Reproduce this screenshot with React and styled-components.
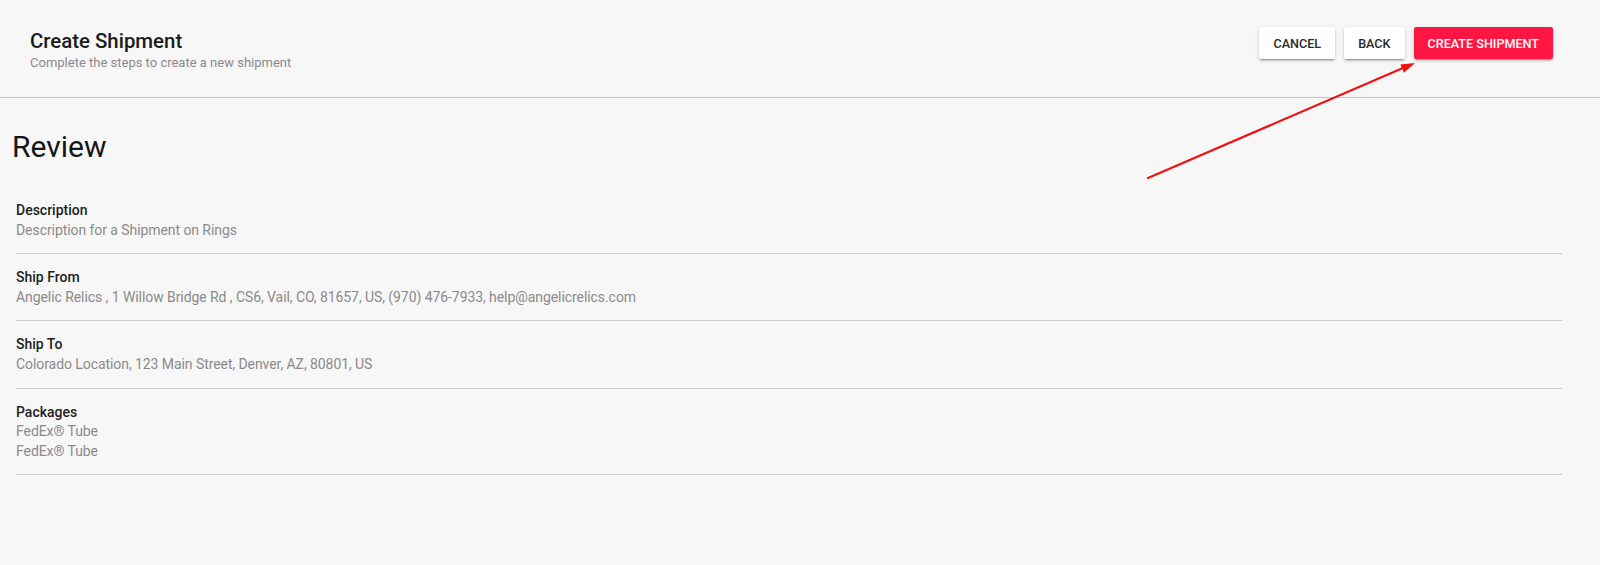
import React from "react";
import styled, { createGlobalStyle } from "styled-components";

const GlobalStyle = createGlobalStyle`
  html, body {
    margin: 0;
    padding: 0;
    background: #f7f7f7;
  }
  body {
    font-family: Roboto, "Noto Sans", "Liberation Sans", sans-serif;
    -webkit-font-smoothing: antialiased;
  }
  * { box-sizing: border-box; }
`;

const Page = styled.div`
  position: relative;
  width: 1600px;
  min-height: 565px;
  background: #f7f7f7;
`;

const Header = styled.header`
  display: flex;
  justify-content: space-between;
  align-items: flex-start;
  padding: 27px 47px 0 30px;
  height: 98px;
  border-bottom: 1px solid #c4c4c4;
`;

const TitleBlock = styled.div`
  display: flex;
  flex-direction: column;
  padding-top: 2px;
`;

const Title = styled.h1`
  margin: 0;
  font-size: 20.4px;
  line-height: 24px;
  font-weight: 500;
  color: #1b1b1b;
`;

const Subtitle = styled.p`
  margin: 1px 0 0;
  font-size: 13px;
  line-height: 18px;
  font-weight: 400;
  color: #8a8a8a;
`;

const Actions = styled.div`
  display: flex;
  gap: 9px;
`;

const Button = styled.button`
  height: 32px;
  padding: 0 14px;
  border: none;
  border-radius: 2px;
  font-family: Roboto, "Liberation Sans", sans-serif;
  font-size: 12.6px;
  font-weight: 500;
  text-transform: uppercase;
  letter-spacing: 0;
  cursor: pointer;
  background: ${(p) => (p.$primary ? "#ff1744" : "#ffffff")};
  color: ${(p) => (p.$primary ? "#ffffff" : "#2a2a2a")};
  box-shadow: 0 3px 1px -2px rgba(0, 0, 0, 0.2), 0 2px 2px 0 rgba(0, 0, 0, 0.14),
    0 1px 5px 0 rgba(0, 0, 0, 0.12);
`;

const Content = styled.main`
  padding: 31px 38px 0 12px;
`;

const Heading = styled.h2`
  margin: 0 0 22px;
  font-size: 30px;
  line-height: 36px;
  font-weight: 400;
  color: #161616;
`;

const Sections = styled.div`
  padding-left: 4px;
`;

const Section = styled.section`
  padding: 14px 0 13px;
  border-bottom: 1px solid #cdcdcd;
`;

const Label = styled.div`
  font-size: 14px;
  line-height: 19.6px;
  font-weight: 500;
  color: #1e1e1e;
`;

const Value = styled.div`
  font-size: 14px;
  line-height: 19.6px;
  font-weight: 400;
  letter-spacing: -0.07px;
  color: #8a8a8a;
`;

const ArrowOverlay = styled.svg`
  position: absolute;
  left: 0;
  top: 0;
  pointer-events: none;
`;

const sections = [
  { label: "Description", values: ["Description for a Shipment on Rings"] },
  {
    label: "Ship From",
    values: [
      "Angelic Relics , 1 Willow Bridge Rd , CS6, Vail, CO, 81657, US, (970) 476-7933, help@angelicrelics.com",
    ],
  },
  { label: "Ship To", values: ["Colorado Location, 123 Main Street, Denver, AZ, 80801, US"] },
  { label: "Packages", values: ["FedEx® Tube", "FedEx® Tube"] },
];

export default function App() {
  return (
    <Page>
      <GlobalStyle />
      <Header>
        <TitleBlock>
          <Title>Create Shipment</Title>
          <Subtitle>Complete the steps to create a new shipment</Subtitle>
        </TitleBlock>
        <Actions>
          <Button>Cancel</Button>
          <Button>Back</Button>
          <Button $primary>Create Shipment</Button>
        </Actions>
      </Header>
      <Content>
        <Heading>Review</Heading>
        <Sections>
          {sections.map((s) => (
            <Section key={s.label}>
              <Label>{s.label}</Label>
              {s.values.map((v, i) => (
                <Value key={i}>{v}</Value>
              ))}
            </Section>
          ))}
        </Sections>
      </Content>
      <ArrowOverlay width="1600" height="565" viewBox="0 0 1600 565">
        <line x1="1148" y1="178" x2="1403" y2="68" stroke="#f01010" strokeWidth="2.2" strokeLinecap="round" />
        <polygon points="1415,63 1400.4,64.4 1403.9,72.7" fill="#f01010" />
      </ArrowOverlay>
    </Page>
  );
}
